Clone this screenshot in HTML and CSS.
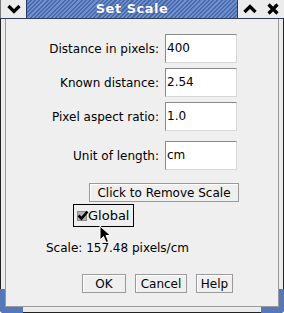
FILE: index.html
```html
<!DOCTYPE html>
<html>

<head>
    <meta charset="UTF-8">
    <title>Set Scale</title>
    <link rel="stylesheet" href="styles.css">
</head>

<body>

    <div class="window">
        <div class="titlebar">
            <div class="tbtn tbtn-left">
                <svg width="14" height="10" viewBox="0 0 14 10"><path d="M1.5 2 L7 7.5 L12.5 2" fill="none" stroke="#000" stroke-width="3.2"/></svg>
            </div>
            <div class="title">Set Scale</div>
            <div class="tbtn">
                <svg width="14" height="10" viewBox="0 0 14 10"><path d="M1.5 8 L7 2.5 L12.5 8" fill="none" stroke="#000" stroke-width="3.2"/></svg>
            </div>
            <div class="tbtn">
                <svg width="12" height="12" viewBox="0 0 12 12"><path d="M1.5 1.5 L10.5 10.5 M10.5 1.5 L1.5 10.5" fill="none" stroke="#000" stroke-width="3.2"/></svg>
            </div>
        </div>

        <div class="frame">
            <div class="content">
                <div class="row">
                    <label>Distance in pixels:</label>
                    <div class="field">400</div>
                </div>
                <div class="row">
                    <label>Known distance:</label>
                    <div class="field">2.54</div>
                </div>
                <div class="row">
                    <label>Pixel aspect ratio:</label>
                    <div class="field">1.0</div>
                </div>
                <div class="row row-unit">
                    <label>Unit of length:</label>
                    <div class="field">cm</div>
                </div>

                <div class="remove-row">
                    <button class="btn btn-remove">Click to Remove Scale</button>
                </div>

                <div class="check-row">
                    <div class="check-focus">
                        <span class="checkbox">
                            <svg width="12" height="11" viewBox="0 0 12 11"><path d="M1.5 5.5 L4.5 8.5 L10.5 1.5" fill="none" stroke="#000" stroke-width="2.6"/></svg>
                        </span>
                        <span>Global</span>
                    </div>
                    <svg class="cursor" width="13" height="19" viewBox="0 0 13 19"><path d="M1 1 L1 15 L4.5 11.5 L7 17.5 L9.5 16.5 L7 10.5 L11.5 10.5 Z" fill="#000" stroke="#fff" stroke-width="1"/></svg>
                </div>

                <p class="scale">Scale: 157.48 pixels/cm</p>

                <div class="btn-container">
                    <button class="btn btn-ok">OK</button>
                    <button class="btn btn-cancel">Cancel</button>
                    <button class="btn btn-help">Help</button>
                </div>
            </div>
            <div class="corner corner-left"></div>
            <div class="corner corner-right"></div>
        </div>
    </div>

</body>

</html>
```

FILE: styles.css
```css
body {
    margin: 0;
    background-color: #ffffff;
    font-family: "DejaVu Sans", sans-serif;
    font-size: 12px;
    color: #000;
}

.window {
    width: 284px;
    height: 313px;
    display: flex;
    flex-direction: column;
    background-color: #ffffff;
}

.titlebar {
    display: flex;
    height: 18px;
    border-bottom: 1px solid #2b3d66;
    background-color: #ececec;
}

.tbtn {
    width: 23px;
    display: flex;
    align-items: center;
    justify-content: center;
    background-color: #ececec;
}

.tbtn-left {
    width: 26px;
    border-left: 1px solid #7a7a7a;
    box-sizing: border-box;
}

.title {
    flex: 1;
    text-align: center;
    color: #fff;
    font-weight: bold;
    font-size: 13px;
    line-height: 18px;
    letter-spacing: 0.5px;
    background-color: #5b7cbf;
    background-image: repeating-linear-gradient(-45deg, #6f8fcf 0px, #6f8fcf 1.5px, #4a69aa 1.5px, #4a69aa 3px);
    border-left: 1px solid #2b3d66;
    border-right: 1px solid #2b3d66;
    text-shadow: 0 0 2px #3a5590;
}

.frame {
    position: relative;
    flex: 1;
    display: flex;
    border-left: 1px solid #222;
    border-right: 1px solid #222;
    border-bottom: 1px solid #222;
    border-radius: 0 0 4px 4px;
    background-color: #ececec;
    padding: 0 4px 5px 4px;
}

.content {
    flex: 1;
    display: flex;
    flex-direction: column;
    background-color: #efefef;
    border-left: 1px solid #9a9a9a;
    border-right: 1px solid #9a9a9a;
    border-bottom: 1px solid #9a9a9a;
    padding-top: 15px;
    position: relative;
    z-index: 1;
}

.row {
    display: flex;
    align-items: center;
    justify-content: flex-end;
    gap: 6px;
    padding-right: 41px;
    margin-bottom: 5px;
}

.row-unit {
    margin-top: 5px;
}

label {
    display: block;
}

.field {
    width: 72px;
    height: 29px;
    box-sizing: border-box;
    background-color: #fff;
    border-top: 1px solid #8a8a8a;
    border-left: 1px solid #8a8a8a;
    border-right: 1px solid #d8d8d8;
    border-bottom: 1px solid #d8d8d8;
    line-height: 27px;
    padding-left: 1px;
}

.remove-row {
    display: flex;
    justify-content: flex-end;
    padding-right: 39px;
    margin-top: 8px;
}

.btn {
    font-family: "DejaVu Sans", sans-serif;
    font-size: 12px;
    color: #000;
    background-color: #efefef;
    border: 1px solid #9a9a9a;
    box-shadow: inset 1px 1px 0 #ffffff;
    height: 19px;
    padding: 0;
    margin: 0;
    border-radius: 0;
}

.btn-remove {
    width: 150px;
}

.check-row {
    position: relative;
    padding-left: 67px;
    margin-top: 2px;
}

.check-focus {
    display: inline-flex;
    align-items: center;
    gap: 0;
    border: 1px solid #000;
    height: 23px;
    box-sizing: border-box;
    padding: 0 4px 0 3px;
    font-size: 13px;
}

.checkbox {
    position: relative;
    width: 10px;
    height: 10px;
    margin-right: 1px;
    background-color: #b4b4b4;
    border: 1px solid #8a8a8a;
    box-sizing: border-box;
}

.checkbox svg {
    position: absolute;
    left: -1px;
    top: -2px;
}

.cursor {
    position: absolute;
    left: 93px;
    top: 21px;
}

.scale {
    margin: 14px 0 0 40px;
    font-size: 12px;
}

.btn-container {
    display: flex;
    justify-content: flex-end;
    gap: 9px;
    padding-right: 45px;
    margin-top: 19px;
}

.btn-ok {
    width: 44px;
}

.btn-cancel {
    width: 52px;
}

.btn-help {
    width: 37px;
}

.corner {
    position: absolute;
    bottom: -1px;
    width: 23px;
    height: 24px;
    background-color: #5677b8;
    z-index: 0;
}

.corner-left {
    left: -1px;
    border-radius: 0 0 0 4px;
}

.corner-right {
    right: -1px;
    border-radius: 0 0 4px 0;
}
```
